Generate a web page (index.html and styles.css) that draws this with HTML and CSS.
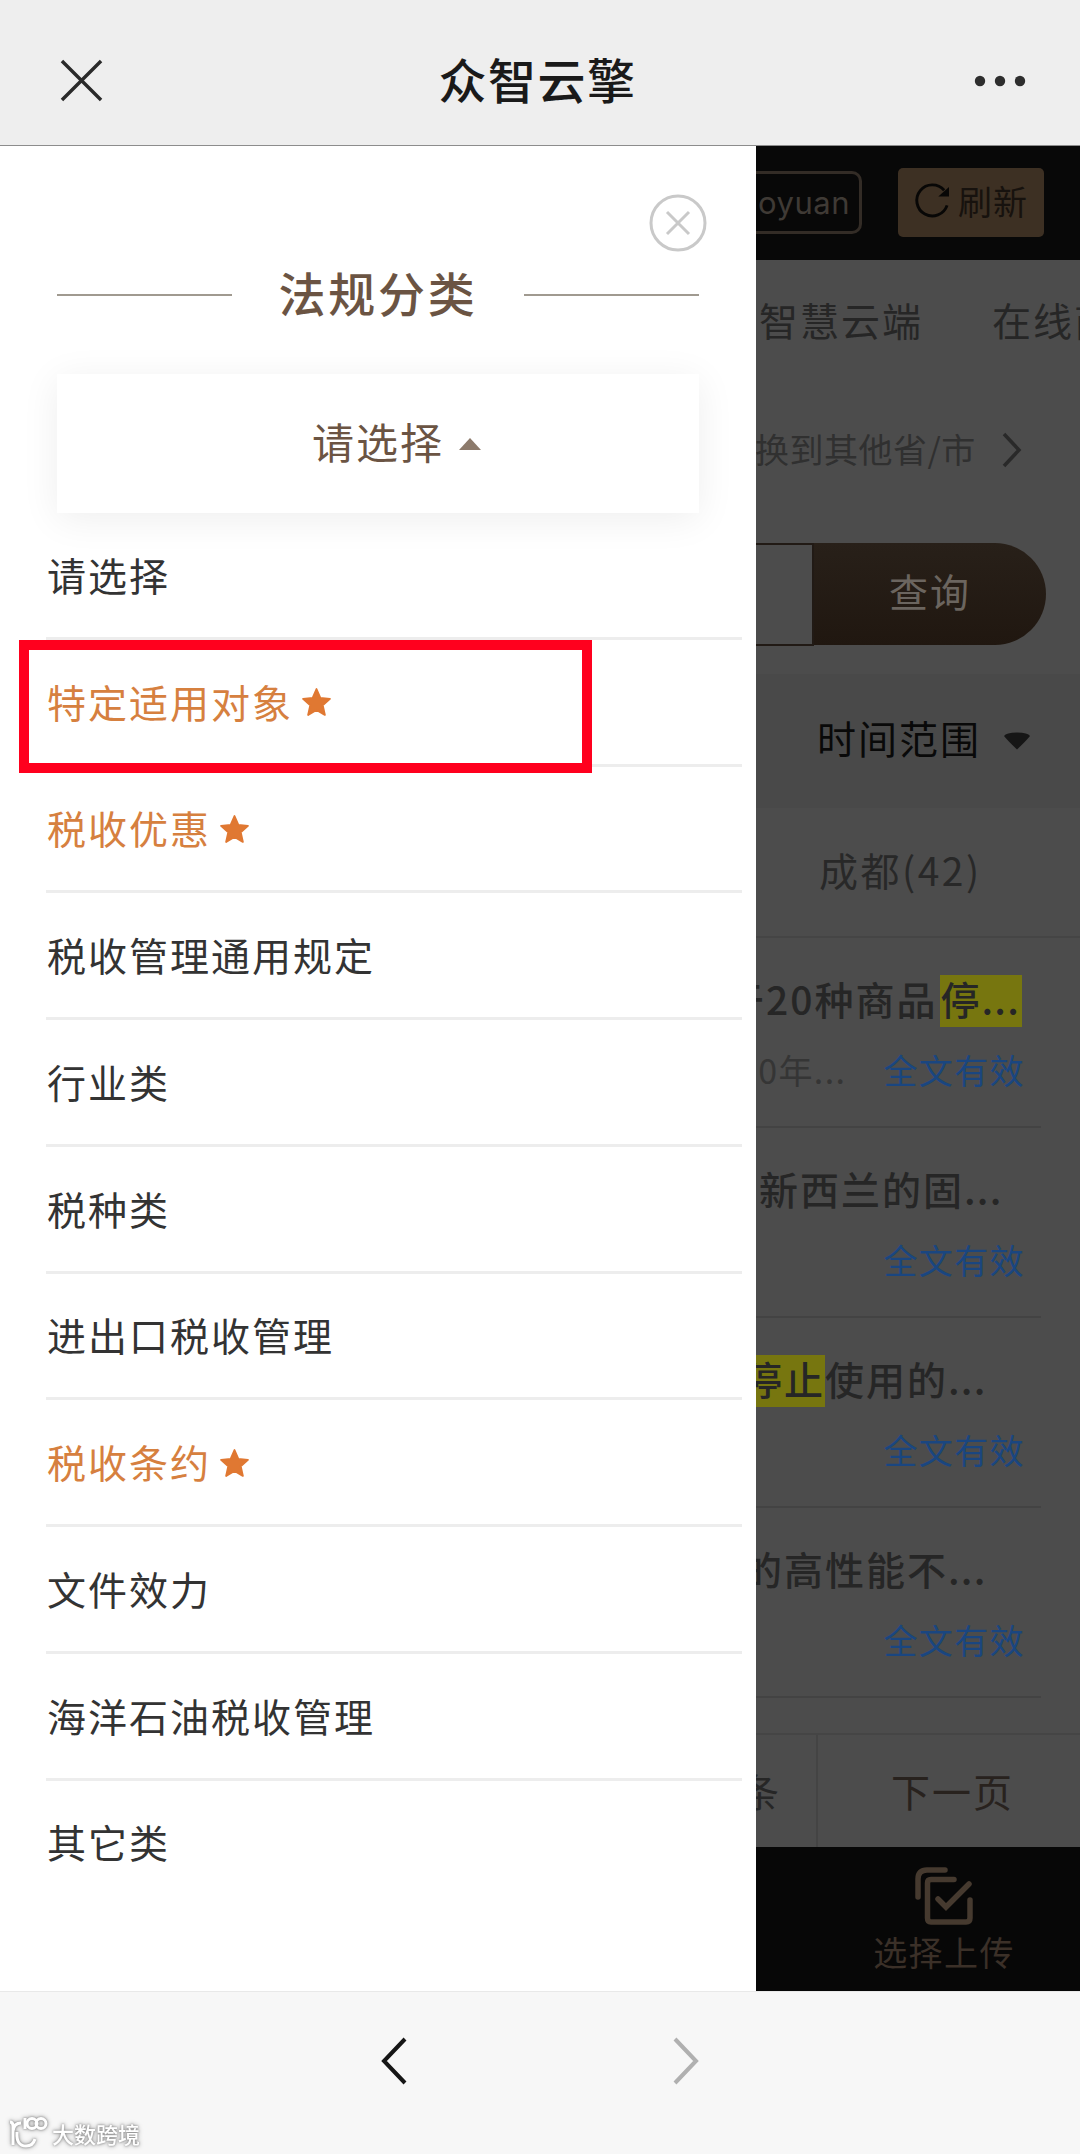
FILE: index.html
```html
<!DOCTYPE html>
<html lang="zh-CN">
<head>
<meta charset="utf-8">
<title>众智云擎</title>
<link rel="stylesheet" href="styles.css">
</head>
<body>
<header class="topbar">
  <svg class="topbar-close" viewBox="0 0 44 44"><path d="M2 2L42 42M42 2L2 42"/></svg>
  <h1 class="topbar-title">众智云擎</h1>
  <svg class="topbar-more" viewBox="0 0 52 12"><circle cx="6" cy="6" r="5.2"/><circle cx="26" cy="6" r="5.2"/><circle cx="46" cy="6" r="5.2"/></svg>
</header>

<main class="main">
  <aside class="drawer">
    <svg class="drawer-close" viewBox="0 0 58 58"><circle cx="29" cy="29" r="27"/><path d="M18 18L40 40M40 18L18 40"/></svg>
    <div class="drawer-head"><i class="rule"></i><h2 class="drawer-title">法规分类</h2><i class="rule"></i></div>
    <div class="select"><span>请选择</span><i class="caret-up"></i></div>
    <ul class="list">
      <li class="item">请选择</li>
      <li class="item hot marked">特定适用对象<svg class="star" viewBox="0 0 30 30"><path d="M15 2l3.700 8.600 9.300.9-7 6.200 2.100 9.300L15 22.200 6.900 27l2.100-9.300-7-6.200 9.300-.9z"/></svg></li>
      <li class="item hot">税收优惠<svg class="star" viewBox="0 0 30 30"><path d="M15 2l3.700 8.600 9.300.9-7 6.200 2.100 9.300L15 22.200 6.900 27l2.100-9.300-7-6.200 9.300-.9z"/></svg></li>
      <li class="item">税收管理通用规定</li>
      <li class="item">行业类</li>
      <li class="item">税种类</li>
      <li class="item">进出口税收管理</li>
      <li class="item hot">税收条约<svg class="star" viewBox="0 0 30 30"><path d="M15 2l3.700 8.600 9.300.9-7 6.200 2.100 9.300L15 22.200 6.900 27l2.100-9.300-7-6.200 9.300-.9z"/></svg></li>
      <li class="item">文件效力</li>
      <li class="item">海洋石油税收管理</li>
      <li class="item">其它类</li>
    </ul>
  </aside>

  <section class="page">
    <div class="userbar">
      <span class="user">oyuan</span>
      <span class="refresh"><svg class="refresh-icon" viewBox="0 0 36 36"><path d="M33 23A16 16 0 1 1 30 7.500"/><path class="tip" d="M35 4v10H24z"/></svg><span class="refresh-text">刷新</span></span>
    </div>
    <nav class="tabs"><span>智慧云端</span><span>在线商城</span></nav>
    <div class="region"><span>换到其他省/市</span><svg class="region-arrow" viewBox="0 0 22 36"><path d="M3 2L18 18L3 34"/></svg></div>
    <div class="search"><span class="search-input"></span><span class="search-btn">查询</span></div>
    <div class="filter"><span>时间范围</span><svg class="filter-arrow" viewBox="0 0 28 18"><path d="M1 4Q3 .5 14 .5T27 4Q23 9 14 17.500Q5 9 1 4z"/></svg></div>
    <div class="city">成都(42)</div>
    <div class="results">
      <article class="result"><h3>于20种商品<mark>停<i>...</i></mark></h3><p><span>20年...</span><b>全文有效</b></p></article>
      <article class="result r2"><h3>新西兰的固<i>...</i></h3><p><b>全文有效</b></p></article>
      <article class="result r3"><h3><mark>停止</mark>使用的<i>...</i></h3><p><b>全文有效</b></p></article>
      <article class="result r3"><h3>的高性能不<i>...</i></h3><p><b>全文有效</b></p></article>
    </div>
    <div class="pager"><span class="count">条</span><span class="next">下一页</span></div>
    <div class="upload">
      <svg class="upload-icon" viewBox="0 0 60 60"><path d="M4 31V13Q4 4 13 4H31"/><path d="M40 13.500H17Q13.500 13.500 13.500 17V52Q13.500 56 17 56H52Q56 56 56 52V34"/><path d="M24 33L32 41L55 18"/></svg>
      <span>选择上传</span>
    </div>
  </section>
</main>

<footer class="navbar">
  <svg class="nav-back" viewBox="0 0 28 50"><path d="M25 3L4 25L25 47"/></svg>
  <svg class="nav-forward" viewBox="0 0 28 50"><path d="M3 3L24 25L3 47"/></svg>
  <div class="watermark">
    <svg viewBox="0 0 40 38"><path d="M2 8Q5 8 5 12V31M5 17Q6 9 13 9M9 18Q8 32 18 32Q25 32 27 25M17 4V15"/><circle cx="24" cy="9.500" r="5"/><circle cx="33" cy="9.500" r="5"/></svg>
    <span>大数跨境</span>
  </div>
</footer>
</body>
</html>
```
FILE: styles.css
```css
*, *::before, *::after { box-sizing: border-box; }
body {
  margin: 0;
  width: 1080px;
  height: 2154px;
  overflow: hidden;
  display: flex;
  flex-direction: column;
  background: #fff;
  font-family: "Noto Sans CJK SC", sans-serif;
  letter-spacing: 2px;
}
h1, h2, h3, p, ul { margin: 0; padding: 0; }
svg { display: block; flex: none; fill: none; overflow: visible; }
span, b { white-space: nowrap; }

.topbar {
  height: 146px;
  flex: none;
  display: flex;
  align-items: center;
  justify-content: space-between;
  padding: 16px 54px 0 60px;
  background: #eee;
  border-bottom: 1px solid #8c8c8c;
}
.topbar-close { width: 43px; height: 43px; stroke: #2a2a2a; stroke-width: 3.5; }
.topbar-title { padding: 0 2px 5px 0; font-size: 48px; line-height: 60px; font-weight: 500; letter-spacing: 1.5px; color: #1a1a1a; }
.topbar-more { width: 52px; height: 12px; margin-top: 1px; fill: #2e2e2e; }

.main { height: 1845px; flex: none; display: flex; }

.drawer {
  width: 756px;
  flex: none;
  padding-top: 48px;
  display: flex;
  flex-direction: column;
  background: #fff;
}
.drawer-close { width: 58px; height: 58px; margin-left: 649px; stroke: #c9c9c9; stroke-width: 3; }
.drawer-head {
  height: 60px;
  margin: 13px 57px 0;
  display: flex;
  align-items: center;
  justify-content: space-between;
}
.rule { width: 175px; height: 2px; background: #a09a90; }
.drawer-title { padding-bottom: 6px; font-size: 47px; line-height: 60px; font-weight: 500; letter-spacing: 2.800px; color: #6b5443; }
.select {
  height: 139px;
  margin: 49px 57px 0;
  padding: 0 0 0 37px;
  display: flex;
  align-items: center;
  justify-content: center;
  gap: 15px;
  background: #fff;
  box-shadow: 0 6px 36px rgba(0, 0, 0, .07);
  font-size: 42px;
  color: #6b5443;
}
.select span { padding-bottom: 6px; }
.caret-up { border: 11px solid transparent; border-top: 0; border-bottom: 12px solid #8c7a6b; }

.list { list-style: none; margin: 0 14px 0 46px; }
.item {
  position: relative;
  height: 126.750px;
  display: flex;
  align-items: center;
  gap: 8px;
  padding: 0 0 2px 1px;
  border-bottom: 3px solid #ededed;
  font-size: 39px;
  color: #333;
}
.item:last-child { border-bottom: 0; padding-bottom: 6px; }
.hot { color: #d6803f; }
.star { width: 31px; height: 31px; margin-top: 4px; fill: #e07832; stroke: #e07832; stroke-width: 1.8; stroke-linejoin: round; }
.marked::after {
  content: "";
  position: absolute;
  left: -27px;
  top: 0;
  width: 573px;
  height: 133px;
  border: 10px solid #ff001e;
  z-index: 1;
}

.page { flex: 1; min-width: 0; overflow: hidden; background: #4c4c4c; color: #262626; font-size: 39px; }
.userbar {
  height: 114px;
  display: flex;
  align-items: center;
  background: #080808;
}
.user {
  width: 106px;
  height: 63px;
  padding-left: 2px;
  margin-bottom: 2px;
  border: 3px solid #332c26;
  border-left: 0;
  border-radius: 0 10px 10px 0;
  font: 31px/57px Inter, sans-serif;
  letter-spacing: .5px;
  color: #3f3a35;
}
.refresh {
  width: 146px;
  height: 69px;
  margin: 0 0 2px 36px;
  padding-left: 17px;
  display: flex;
  align-items: center;
  gap: 8px;
  border-radius: 5px;
  background: #3d3023;
  color: #17120e;
  font-size: 34px;
  letter-spacing: 1px;
}
.refresh-text { padding-bottom: 4px; }
.refresh-icon { width: 35px; height: 35px; margin-bottom: 4px; stroke: #080706; stroke-width: 3; }
.refresh-icon .tip { fill: #080706; stroke: none; }
.tabs { height: 126px; padding: 0 0 8px 3px; display: flex; align-items: center; gap: 69px; }
.region { height: 130px; display: flex; align-items: center; gap: 25px; font-size: 34px; letter-spacing: .500px; color: #303030; text-indent: -1px; }
.region span { padding-bottom: 5px; }
.region-arrow { width: 22px; height: 36px; margin-bottom: 2px; stroke: #292929; stroke-width: 3.5; }
.search { height: 102px; margin-top: 27px; display: flex; }
.search-input { width: 58px; height: 103px; border: 2px solid #211a15; border-left: 0; }
.search-btn {
  width: 232px;
  height: 102px;
  border-radius: 0 51px 51px 0;
  background: linear-gradient(#282019, #201710);
  color: #6b655f;
  text-align: center;
  line-height: 95px;
}
.filter { height: 134px; margin-top: 29px; padding-left: 61px; display: flex; align-items: center; gap: 22px; background: #494949; color: #090909; }
.filter span { padding-bottom: 8px; }
.filter-arrow { width: 28px; height: 18px; fill: #161616; }
.city { height: 130px; padding-left: 63px; line-height: 123px; letter-spacing: 2.500px; color: #282828; border-bottom: 2px solid #454545; }
.result { height: 190px; margin-right: 39px; border-bottom: 2px solid #434343; padding-top: 34px; }
.result h3 { display: flex; margin-left: -31px; height: 60px; line-height: 53px; font-size: 39px; font-weight: 500; white-space: nowrap; }
.result h3 i { font-style: normal; letter-spacing: 1.200px; }
.result.r2 h3 { margin-left: 3px; }
.result.r3 h3 { margin-left: -13px; }
.result mark { height: 52px; line-height: 47px; margin-top: 3px; background: #77760f; color: inherit; }
.result:first-child mark { width: 82px; margin-left: 3px; }
.result p { height: 60px; margin-top: 8px; display: flex; justify-content: flex-end; gap: 37px; line-height: 60px; padding-right: 16px; font-size: 34px; letter-spacing: 1.400px; color: #353535; }
.result b { font-weight: 400; color: #1a4680; }
.pager { height: 114px; margin-top: 35px; display: flex; border-top: 2px solid #454545; line-height: 110px; }
.count { width: 62px; border-right: 2px solid #444; text-indent: -16px; }
.next { flex: 1; text-align: center; padding-left: 7px; color: #28221e; }
.upload { height: 146px; display: flex; flex-direction: column; align-items: center; padding: 19px 0 0 52px; background: #070707; color: #3b3028; font-size: 34px; line-height: 51px; letter-spacing: 1.400px; }
.upload-icon { width: 60px; height: 60px; stroke: #463a2f; stroke-width: 5.500; stroke-linecap: round; }

.navbar { position: relative; flex: 1; background: #f7f7f7; border-top: 1px solid #e9e9e9; display: flex; align-items: center; padding: 0 380px 24px; justify-content: space-between; }
.nav-back, .nav-forward { width: 28px; height: 50px; stroke: #161616; stroke-width: 4; }
.nav-forward { stroke: #b0b0b0; }
.watermark { position: absolute; left: 8px; bottom: 2px; display: flex; align-items: center; gap: 4px; font-size: 22px; letter-spacing: 0; color: #fff; filter: drop-shadow(0 0 1px #888) drop-shadow(0 0 2px #aaa); font-weight: 500; }
.watermark svg { width: 40px; height: 38px; stroke: #fff; stroke-width: 3; }
```
